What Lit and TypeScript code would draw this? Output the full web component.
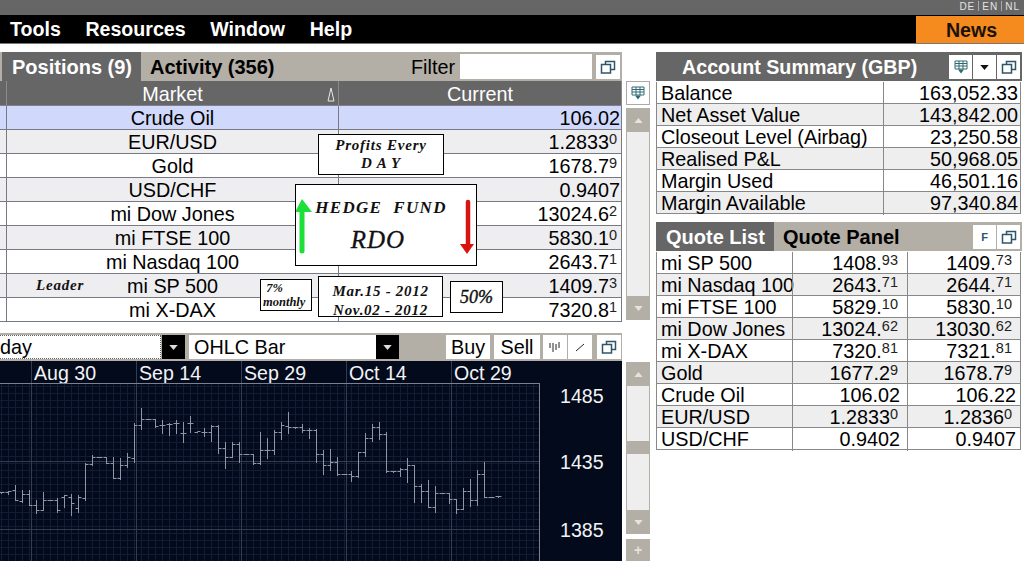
import { LitElement, html, css, svg } from "lit";
import { customElement } from "lit/decorators.js";

type Num = [string, string?];
const positions: { m: string; v: Num }[] = [
  { m: "Crude Oil", v: ["106.02"] },
  { m: "EUR/USD", v: ["1.2833", "0"] },
  { m: "Gold", v: ["1678.7", "9"] },
  { m: "USD/CHF", v: ["0.9407"] },
  { m: "mi Dow Jones", v: ["13024.6", "2"] },
  { m: "mi FTSE 100", v: ["5830.1", "0"] },
  { m: "mi Nasdaq 100", v: ["2643.7", "1"] },
  { m: "mi SP 500", v: ["1409.7", "3"] },
  { m: "mi X-DAX", v: ["7320.8", "1"] },
];
const account = [
  ["Balance", "163,052.33"],
  ["Net Asset Value", "143,842.00"],
  ["Closeout Level (Airbag)", "23,250.58"],
  ["Realised P&L", "50,968.05"],
  ["Margin Used", "46,501.16"],
  ["Margin Available", "97,340.84"],
];
const quotes: { m: string; a: Num; b: Num }[] = [
  { m: "mi SP 500", a: ["1408.", "93"], b: ["1409.", "73"] },
  { m: "mi Nasdaq 100", a: ["2643.", "71"], b: ["2644.", "71"] },
  { m: "mi FTSE 100", a: ["5829.", "10"], b: ["5830.", "10"] },
  { m: "mi Dow Jones", a: ["13024.", "62"], b: ["13030.", "62"] },
  { m: "mi X-DAX", a: ["7320.", "81"], b: ["7321.", "81"] },
  { m: "Gold", a: ["1677.2", "9"], b: ["1678.7", "9"] },
  { m: "Crude Oil", a: ["106.02"], b: ["106.22"] },
  { m: "EUR/USD", a: ["1.2833", "0"], b: ["1.2836", "0"] },
  { m: "USD/CHF", a: ["0.9402"], b: ["0.9407"] },
];

// OHLC bars measured off the reference: [high, low, open, close], page y.
const bars: number[][] = [
  [492, 493, 492, 492], [491, 494, 492, 491], [485, 500, 490, 500], [490, 502, 501, 494],
  [490, 505, 494, 505], [500, 513, 505, 510], [492, 510, 510, 500], [500, 500, 500, 500],
  [498, 512, 500, 510], [495, 507, 497, 495], [494, 515, 497, 503], [495, 512, 508, 497],
  [463, 500, 498, 464], [455, 465, 464, 457], [457, 457, 457, 457], [457, 463, 457, 463],
  [457, 478, 463, 478], [458, 479, 478, 465], [453, 467, 465, 457], [423, 462, 458, 425],
  [408, 429, 425, 419], [419, 419, 419, 419], [419, 427, 419, 426], [420, 433, 425, 425],
  [423, 435, 424, 424], [420, 433, 423, 423], [422, 442, 433, 433], [416, 432, 423, 423],
  [432, 432, 432, 431], [428, 436, 432, 432], [425, 441, 432, 426], [425, 453, 426, 448],
  [442, 468, 448, 457], [442, 457, 457, 444], [442, 462, 444, 454], [454, 454, 454, 454],
  [454, 464, 454, 463], [432, 464, 463, 450], [438, 458, 450, 450], [430, 454, 450, 432],
  [422, 439, 432, 425], [412, 433, 426, 427], [427, 428, 427, 427], [424, 432, 427, 430],
  [428, 438, 430, 430], [429, 462, 430, 454], [450, 474, 454, 465],
  [449, 470, 465, 462], [457, 475, 462, 474], [474, 474, 474, 474], [471, 481, 474, 476],
  [452, 477, 476, 452], [433, 456, 452, 438], [424, 441, 438, 427], [422, 439, 427, 434],
  [432, 472, 434, 471], [471, 472, 471, 471], [468, 476, 471, 469], [458, 482, 469, 465],
  [465, 502, 465, 486], [484, 502, 486, 491], [480, 507, 491, 507], [486, 512, 507, 493],
  [493, 493, 493, 493], [493, 503, 493, 499], [499, 513, 499, 509], [488, 509, 509, 491],
  [479, 506, 491, 500], [470, 505, 500, 474], [462, 497, 474, 497], [497, 497, 497, 497],
  [496, 497, 496, 496],
];

const popout = html`<svg class="ico" viewBox="0 0 16 16"><rect x="5.5" y="2.5" width="9" height="8" fill="none" stroke="#2e5668" stroke-width="1.5"/><rect x="1.5" y="5.5" width="9" height="8.5" fill="#fff" stroke="#2e5668" stroke-width="1.5"/></svg>`;
const tableIco = html`<svg class="ico" viewBox="0 0 16 16"><path d="M2 2h12v8H2zM2 4.5h12M2 7h12M6 2v8M10 2v8" fill="none" stroke="#2f6a74" stroke-width="1"/><path d="M5 10.5h6l-3 4z" fill="#2f6a74"/></svg>`;
const caret = html`<svg class="caret" viewBox="0 0 10 6"><path d="M0 0h10L5 6z" fill="currentColor"/></svg>`;
const caretUp = html`<svg class="caret up" viewBox="0 0 10 6"><path d="M0 0h10L5 6z" fill="currentColor"/></svg>`;

@customElement("app-root")
export class AppRoot extends LitElement {
  static styles = css`
    :host { display: block; width: 1024px; height: 561px; overflow: hidden; background: #fff; font-family: "Liberation Sans", Arial, sans-serif; font-size: 19.8px; color: #000; }
    .top { height: 15px; background: #666; color: #e4e4e4; display: flex; justify-content: flex-end; align-items: center; gap: 3px; padding: 0 4px 3px 0; box-sizing: border-box; font-size: 10px; letter-spacing: 1px; }
    .top i { width: 1px; height: 10px; background: #aaa; }
    .menu { height: 28px; background: #000; color: #fff; font-weight: 700; font-size: 19.6px; display: flex; align-items: stretch; justify-content: space-between; border-bottom: 1px solid #777; box-sizing: content-box; }
    .menu-items { display: flex; align-items: center; gap: 24.6px; padding-left: 10px; }
    .news { width: 108px; margin-top: 1px; background: #f58a1f; color: #1a1208; display: flex; align-items: center; justify-content: center; padding: 1px 0 0 3px; box-sizing: border-box; }
    .content { display: grid; grid-template-columns: 622px 34px 368px; padding-top: 8px; }
    .left { display: flex; flex-direction: column; gap: 11px; }
    .panel { position: relative; }
    .tabs { height: 29px; background: #b3aea6; display: flex; align-items: stretch; font-weight: 700; font-size: 20px; }
    .tabs.pos { padding-left: 2px; }
    .tab { display: flex; align-items: center; padding: 1px 9px 0; }
    .tab.on { background: #666; color: #fff; padding-left: 10px; }
    .filter { margin-left: auto; display: flex; align-items: center; gap: 4px; padding-right: 2px; font-weight: 400; font-size: 19.8px; padding-top: 1px; }
    .filter span { margin-right: 1px; }
    .input { width: 132px; height: 25px; margin-top: -1px; background: #fff; box-sizing: border-box; }
    .btn { width: 24px; height: 24px; background: #fff; display: flex; align-items: center; justify-content: center; box-sizing: border-box; color: #111; font-size: 11px; font-weight: 700; }
    .filter .btn { margin-top: -1px; }
    .btn-set { display: flex; gap: 1px; margin-left: auto; align-self: center; padding-right: 2px; }
    .btn-set .btn { width: 23px; }
    .btn.f { color: #2e5668; }
    .ico { width: 16px; height: 16px; display: block; }
    .caret { width: 9px; height: 5px; display: block; }
    .head, .row { display: grid; grid-template-columns: 7px 332px 1fr; }
    .head { height: 25px; background: #666; color: #fff; box-sizing: border-box; border-bottom: 1px solid #7e8090; }
    .head > div { border-right: 1px solid #8a8a8a; display: flex; align-items: center; justify-content: center; position: relative; padding-top: 2px; }
    .delta { position: absolute; right: 3px; top: 6px; width: 8px; height: 15px; }
    .row { height: 24px; box-sizing: border-box; border-bottom: 1px solid #777983; background: #fff; }
    .row:nth-child(even) { background: #eeeef0; }
    .row.sel { background: #d0d9fb; }
    .row > div { border-right: 1px solid #777983; display: flex; align-items: center; justify-content: center; white-space: nowrap; padding-top: 1px; }
    .row > .val { justify-content: flex-end; padding-right: 1px; }
    .row > .val sup { margin-right: 3px; }
    .num sup { font-size: 14.5px; line-height: 0; vertical-align: 5px; color: #222; }
    .over { position: absolute; background: #fff; border: 1px solid #000; box-sizing: border-box; font-family: "Liberation Serif", serif; font-style: italic; font-weight: 700; text-align: center; white-space: pre; color: #111; }
    .profits { left: 318px; top: 82px; width: 126px; height: 41px; font-size: 15px; line-height: 18px; padding-top: 1px; letter-spacing: 0.8px; }
    .hedge { left: 295px; top: 132px; width: 182px; height: 82px; }
    .hedge svg { position: absolute; inset: 0; width: 180px; height: 80px; }
    .h1 { position: absolute; left: 0; right: 10px; top: 13px; font-size: 17px; line-height: 20px; letter-spacing: 1.3px; }
    .h2 { position: absolute; left: 0; right: 16px; top: 40px; font-size: 25px; line-height: 30px; font-weight: 400; letter-spacing: 1px; -webkit-text-stroke: 0.3px #111; }
    .pct7 { left: 260px; top: 227px; width: 52px; height: 32px; font-size: 12.5px; line-height: 14px; text-align: left; padding: 1px 0 0 2px; }
    .dates { left: 318px; top: 224px; width: 125px; height: 41px; font-size: 15px; line-height: 19px; padding-top: 5px; letter-spacing: 0.7px; overflow: hidden; }
    .pct50 { left: 450px; top: 229px; width: 53px; height: 32px; font-size: 18px; line-height: 30px; font-weight: 400; -webkit-text-stroke: 0.4px #111; }
    .leader { position: absolute; left: 36px; top: 225px; font-family: "Liberation Serif", serif; font-style: italic; font-weight: 700; font-size: 15px; line-height: 16px; letter-spacing: 0.8px; color: #111; }
    .tools { height: 28px; background: #b3aea6; display: flex; align-items: center; box-sizing: border-box; }
    .sel-a { width: 161px; height: 24px; background: #fff; border: 1px dotted #666; border-left: 0; box-sizing: border-box; display: flex; align-items: center; overflow: hidden; }
    .drop { width: 23px; height: 24px; background: #000; color: #ddd; display: flex; align-items: center; justify-content: center; }
    .gap1 { margin-left: 1px; }
    .sel-b { margin-left: 4px; width: 187px; height: 24px; background: #fff; box-sizing: border-box; display: flex; align-items: center; padding-left: 5px; }
    .act { height: 24px; background: #fff; display: flex; align-items: center; justify-content: center; }
    .buy { margin-left: 47px; width: 44px; }
    .sell { margin-left: 4px; width: 46px; }
    .t1 { margin-left: 3px; }
    .t2 { margin-left: 1px; }
    .t3 { margin-left: 5px; }
    .chart { display: block; width: 622px; height: 200px; background: #030a1c; }
    .chart text { font-family: "Liberation Sans", Arial, sans-serif; font-size: 19.6px; fill: #f2f3f5; }
    .gutter { display: flex; flex-direction: column; align-items: flex-start; padding-left: 4px; }
    .gutter .btn { border: 1px solid #aaa; }
    .g-first { margin-top: 29px; }
    .sb { width: 24px; background: #b3aea6; display: flex; align-items: center; justify-content: center; color: #e6e3de; }
    .sb.a { height: 24px; }
    .g-near { margin-top: 3px; }
    .track { width: 24px; background: #eeeeee; box-sizing: border-box; border-left: 1px solid #b3aea6; border-right: 1px solid #b3aea6; }
    .t-long { height: 164px; }
    .g-second { margin-top: 42px; }
    .t-a { height: 55px; }
    .t-b { height: 56px; }
    .thumb { width: 24px; height: 13px; background: #b3aea6; }
    .plus { height: 22px; margin-top: 5px; font-size: 14px; font-weight: 700; }
    .up { transform: rotate(180deg); }
    .right { display: flex; flex-direction: column; width: 366px; }
    .ahead { height: 29px; background: #666; color: #fff; font-weight: 700; font-size: 19.7px; display: flex; align-items: center; padding: 1px 0 0 26px; box-sizing: border-box; }
    .gridT { border-left: 1px solid #888; border-right: 1px solid #888; margin-right: 1px; margin-top: 1px; }
    .ar { display: grid; grid-template-columns: 226px 1fr; height: 22px; box-sizing: border-box; border-bottom: 1px solid #888; background: #fff; }
    .ar:nth-child(even) { background: #eeeeee; }
    .ar > div, .qr > div { display: flex; align-items: center; white-space: nowrap; padding-left: 4px; }
    .ar > div + div { border-left: 1px solid #888; justify-content: flex-end; padding: 0 2px 0 0; }
    .qr > div + div { border-left: 1px solid #888; justify-content: flex-end; padding: 0 4px 0 0; }
    .qr > .c2 { padding-right: 7px; }
    .c2 sup { margin-right: 2px; }
    .c3 sup { margin-right: 4px; }
    .qr { display: grid; grid-template-columns: 135px 115px 1fr; height: 22px; box-sizing: border-box; border-bottom: 1px solid #888; background: #fff; }
    .qr:nth-child(even) { background: #eeeeee; }
    .qtabs { margin-top: 8px; }
  `;

  private num(n: Num) {
    return html`<span class="num">${n[0]}${n[1] ? html`<sup>${n[1]}</sup>` : ""}</span>`;
  }

  private chart() {
    const H = 361;
    const fine: unknown[] = [];
    for (let x = 1.5; x < 540; x += 7) fine.push(svg`<line x1=${x} x2=${x} y1="22" y2="200" stroke="#111c36" stroke-width="1"/>`);
    for (let y = 25.5; y < 200; y += 7) fine.push(svg`<line x1="0" x2="540" y1=${y} y2=${y} stroke="#111c36" stroke-width="1"/>`);
    const major = [32, 137, 242, 347, 452];
    const labels = ["Aug 30", "Sep 14", "Sep 29", "Oct 14", "Oct 29"];
    return html`<svg class="chart" viewBox="0 0 622 200">
      ${fine}
      ${major.map((x, i) => svg`<line x1=${x - 0.5} x2=${x - 0.5} y1="0" y2="200" stroke="#343c50"/><text x=${x + 2} y="19">${labels[i]}</text>`)}
      <line x1="0" x2="540" y1="100.5" y2="100.5" stroke="#343c50"/>
      <line x1="0" x2="540" y1="168.5" y2="168.5" stroke="#343c50"/>
      <line x1="0" x2="540" y1="22.5" y2="22.5" stroke="#7a8090"/>
      <line x1="539.5" x2="539.5" y1="22" y2="200" stroke="#7a8090"/>
      ${bars.map((b, i) => {
        const x = 1.5 + 7 * i;
        const [h, l, o, c] = b.map((v) => Math.round(v - H) + 0.5);
        return svg`<path d="M${x} ${h - 0.5}V${l + 0.5}M${x - 3} ${o}H${x}M${x} ${c}H${x + 3}" stroke="#8f96a5" stroke-width="1" fill="none"/>`;
      })}
      <text x="560" y="42">1485</text>
      <text x="560" y="108">1435</text>
      <text x="560" y="176">1385</text>
    </svg>`;
  }

  render() {
    return html`
      <div class="top"><span>DE</span><i></i><span>EN</span><i></i><span>NL</span></div>
      <div class="menu">
        <div class="menu-items"><span>Tools</span><span>Resources</span><span>Window</span><span>Help</span></div>
        <div class="news">News</div>
      </div>
      <div class="content">
        <div class="left">
          <section class="panel">
            <div class="tabs pos">
              <div class="tab on">Positions (9)</div>
              <div class="tab">Activity (356)</div>
              <div class="filter"><span>Filter</span><div class="input"></div><div class="btn">${popout}</div></div>
            </div>
            <div class="head">
              <div></div>
              <div>Market<svg class="delta" viewBox="0 0 8 15"><path d="M4 1L1 14h6z" fill="none" stroke="#e8e8e8" stroke-width="1"/></svg></div>
              <div>Current</div>
            </div>
            <div>
              ${positions.map((p, i) => html`<div class="row ${i === 0 ? "sel" : ""}"><div></div><div>${p.m}</div><div class="val">${this.num(p.v)}</div></div>`)}
            </div>
            <div class="over profits">Profits Every
D A Y</div>
            <div class="over hedge">
              <svg viewBox="0 0 180 80"><path d="M6 66V22" stroke="#1ce038" stroke-width="5" stroke-linecap="round"/><path d="M-1 27L6 14l10 13z" fill="#1ce038"/><path d="M172 17V60" stroke="#d81410" stroke-width="4.5" stroke-linecap="round"/><path d="M164 59h14l-7 10z" fill="#d81410"/></svg>
              <div class="h1">HEDGE  FUND</div>
              <div class="h2">RDO</div>
            </div>
            <div class="over pct7"> 7%
monthly</div>
            <div class="over dates">Mar.15 - 2012
Nov.02 - 2012</div>
            <div class="over pct50">50%</div>
            <div class="leader">Leader</div>
          </section>
          <section class="panel">
            <div class="tools">
              <div class="sel-a">day</div>
              <div class="drop gap1">${caret}</div>
              <div class="sel-b">OHLC Bar</div>
              <div class="drop">${caret}</div>
              <div class="act buy">Buy</div>
              <div class="act sell">Sell</div>
              <div class="btn t1"><svg class="ico" viewBox="0 0 16 16"><path d="M3 4v5M6 4v9M9 5v6M12 3v6" stroke="#222" stroke-width="1"/></svg></div>
              <div class="btn t2"><svg class="ico" viewBox="0 0 16 16"><path d="M4 12L12 5" stroke="#222" stroke-width="1"/></svg></div>
              <div class="btn t3">${popout}</div>
            </div>
            ${this.chart()}
          </section>
        </div>
        <div class="gutter">
          <div class="btn g-first">${tableIco}</div>
          <div class="sb a g-near">${caretUp}</div>
          <div class="track t-long"></div>
          <div class="sb a">${caret}</div>
          <div class="sb a g-second">${caretUp}</div>
          <div class="track t-a"></div>
          <div class="thumb"></div>
          <div class="track t-b"></div>
          <div class="sb a">${caret}</div>
          <div class="sb plus">+</div>
        </div>
        <div class="right">
          <div class="ahead">Account Summary (GBP)
            <div class="btn-set"><div class="btn">${tableIco}</div><div class="btn">${caret}</div><div class="btn">${popout}</div></div>
          </div>
          <div class="gridT">
            ${account.map((r) => html`<div class="ar"><div>${r[0]}</div><div>${r[1]}</div></div>`)}
          </div>
          <div class="tabs qtabs">
            <div class="tab on">Quote List</div>
            <div class="tab">Quote Panel</div>
            <div class="btn-set"><div class="btn f">F</div><div class="btn">${popout}</div></div>
          </div>
          <div class="gridT">
            ${quotes.map((q) => html`<div class="qr"><div>${q.m}</div><div class="c2">${this.num(q.a)}</div><div class="c3">${this.num(q.b)}</div></div>`)}
          </div>
        </div>
      </div>
    `;
  }
}
